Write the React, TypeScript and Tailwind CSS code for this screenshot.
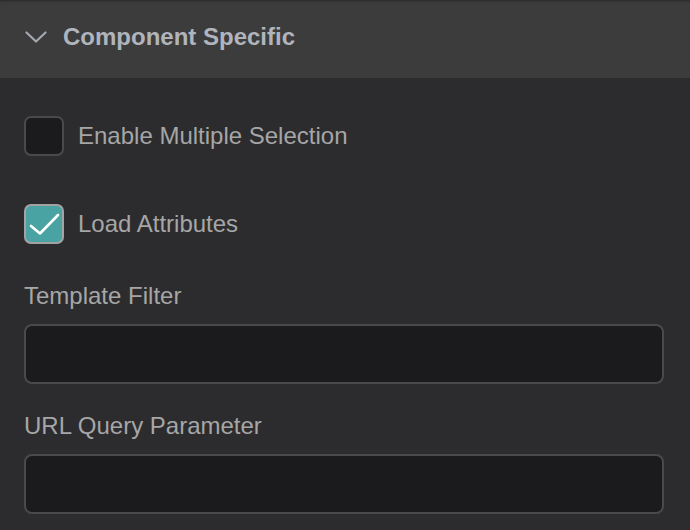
import { useState } from 'react';

function Checkbox({ checked, onToggle, label }: { checked: boolean; onToggle: () => void; label: string }) {
    return (
        <label className="flex items-center gap-[14px] cursor-pointer select-none" onClick={onToggle}>
            <span
                className={`w-10 h-10 rounded-[7px] border-2 flex items-center justify-center shrink-0 ${
                    checked ? 'bg-[#4aa3a3] border-[#a3a3a3]' : 'bg-[#1b1b1d] border-[#4a4a4c]'
                }`}
            >
                {checked && (
                    <svg width="40" height="40" viewBox="0 0 40 40" className="-m-[2px]">
                        <path d="M7 22 L16 29.5 L34 11" fill="none" stroke="#ffffff" strokeWidth="2.6" strokeLinecap="round" strokeLinejoin="round" />
                    </svg>
                )}
            </span>
            <span className="text-[24px] leading-7 text-[#a6a6a6]">{label}</span>
        </label>
    );
}

export default function App() {
    const [multi, setMulti] = useState(false);
    const [loadAttrs, setLoadAttrs] = useState(true);

    return (
        <div className="w-[690px] h-[530px] bg-[#2c2c2e] overflow-hidden" style={{ fontFamily: '"Liberation Sans", Arial, sans-serif' }}>
            {/* Section header */}
            <div className="h-[78px] bg-[#3c3c3c] flex items-center gap-4 pl-[25px] pb-1 shadow-[inset_0_3px_3px_-2px_rgba(0,0,0,0.35)]">
                <svg width="22" height="12" viewBox="0 0 22 12" className="shrink-0">
                    <path d="M1.5 1.5 L11 10.5 L20.5 1.5" fill="none" stroke="#a4a9b1" strokeWidth="2.2" strokeLinecap="round" strokeLinejoin="round" />
                </svg>
                <h2 className="text-[24px] font-bold text-[#b0b5bd] leading-7">Component Specific</h2>
            </div>

            {/* Body */}
            <div className="pl-6 pr-[26px] pt-[38px] flex flex-col">
                <div className="flex flex-col gap-12">
                    <Checkbox checked={multi} onToggle={() => setMulti(!multi)} label="Enable Multiple Selection" />
                    <Checkbox checked={loadAttrs} onToggle={() => setLoadAttrs(!loadAttrs)} label="Load Attributes" />
                </div>

                <div className="mt-[38px] flex flex-col">
                    <span className="text-[24px] leading-7 text-[#a6a6a6]">Template Filter</span>
                    <input className="mt-[14px] h-[60px] w-full rounded-lg border-2 border-[#4a4a4c] bg-[#1b1b1d] px-4 text-[22px] text-[#d0d0d0] outline-none" />
                </div>

                <div className="mt-[28px] flex flex-col">
                    <span className="text-[24px] leading-7 text-[#a6a6a6]">URL Query Parameter</span>
                    <input className="mt-[14px] h-[60px] w-full rounded-lg border-2 border-[#4a4a4c] bg-[#1b1b1d] px-4 text-[22px] text-[#d0d0d0] outline-none" />
                </div>
            </div>
        </div>
    );
}
